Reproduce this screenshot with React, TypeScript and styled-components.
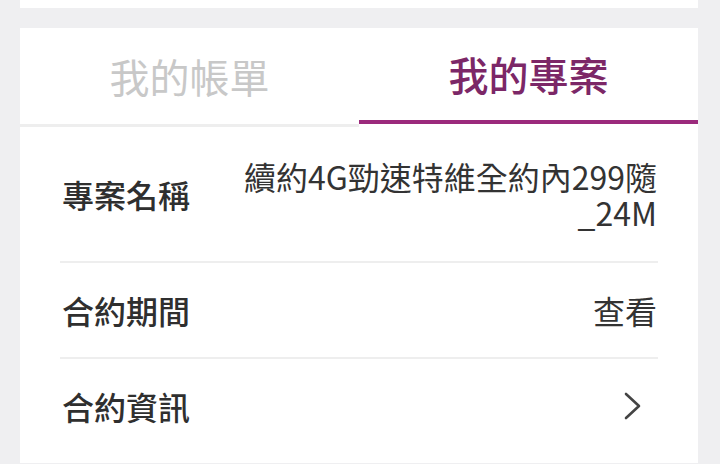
import React from "react";
import styled, { createGlobalStyle } from "styled-components";

const Global = createGlobalStyle`
  html, body { margin: 0; padding: 0; background: #efeff1; }
  body { font-family: "Noto Sans CJK TC", "Noto Sans", sans-serif; }
`;

const Page = styled.div`
  width: 720px;
  height: 464px;
  overflow: hidden;
  padding: 0 22px 0 20px;
  box-sizing: border-box;
  display: flex;
  flex-direction: column;
  gap: 20px;
`;

const TopCard = styled.div`
  height: 8px;
  background: #fff;
`;

const Card = styled.div`
  background: #fff;
  display: flex;
  flex-direction: column;
  padding-bottom: 10px;
`;

const Tabs = styled.div`
  display: flex;
  height: 99px;
`;

const Tab = styled.div<{ $active?: boolean }>`
  flex: 1;
  display: flex;
  align-items: center;
  justify-content: center;
  font-size: 40px;
  font-weight: ${(p) => (p.$active ? 500 : 400)};
  color: ${(p) => (p.$active ? "#7c2767" : "#c8c8c8")};
  box-sizing: border-box;
  border-bottom: ${(p) => (p.$active ? "4px solid #9b2a7c" : "3px solid #eeeeee")};
  margin-bottom: ${(p) => (p.$active ? "3px" : "0")};
`;

const List = styled.div`
  display: flex;
  flex-direction: column;
  padding: 0 40px 0 40px;
`;

const Row = styled.div<{ $last?: boolean }>`
  display: flex;
  align-items: center;
  justify-content: space-between;
  gap: 40px;
  padding: 29px 0;
  border-bottom: ${(p) => (p.$last ? "none" : "2px solid #eeeeee")};
`;

const Label = styled.div`
  font-size: 32px;
  font-weight: 500;
  color: #2f2f2f;
  line-height: 36px;
  white-space: nowrap;
  padding-left: 2px;
`;

const Value = styled.div<{ $multi?: boolean }>`
  font-size: 32px;
  color: #333;
  line-height: 36px;
  padding: ${(p) => (p.$multi ? "2px 1px 2px 0" : "0 1px 0 0")};
  text-align: right;
  max-width: 420px;
`;

const Chevron = styled.svg`
  width: 20px;
  height: 28px;
  margin-right: 15px;
`;

export default function App() {
  return (
    <>
      <Global />
      <Page>
        <TopCard />
        <Card>
          <Tabs>
            <Tab>我的帳單</Tab>
            <Tab $active>我的專案</Tab>
          </Tabs>
          <List>
            <Row>
              <Label>專案名稱</Label>
              <Value $multi>續約4G勁速特維全約內299隨<br />_24M</Value>
            </Row>
            <Row>
              <Label>合約期間</Label>
              <Value>查看</Value>
            </Row>
            <Row $last>
              <Label>合約資訊</Label>
              <Chevron viewBox="0 0 20 28" fill="none">
                <path d="M3 2 L16 14 L3 26" stroke="#444" strokeWidth="2.6" strokeLinecap="round" strokeLinejoin="round" />
              </Chevron>
            </Row>
          </List>
        </Card>
      </Page>
    </>
  );
}
